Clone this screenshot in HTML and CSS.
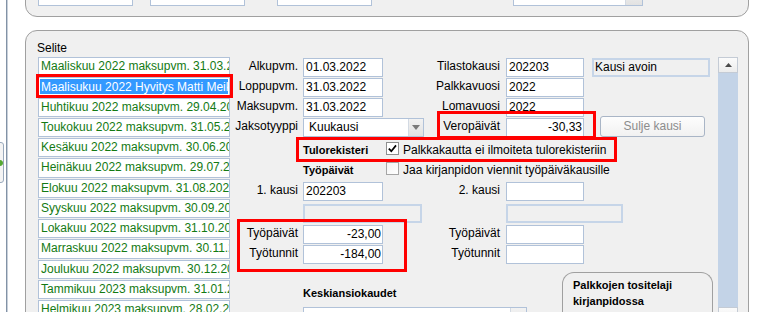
FILE: index.html
```html
<!DOCTYPE html>
<html lang="fi">
<head>
<meta charset="utf-8">
<title>Palkkakausi</title>
<link rel="stylesheet" href="styles.css">
</head>
<body>
<div class="page">
  <div class="side">
    <div class="side-btn"><span class="side-ico"></span></div>
    <div class="side-line"></div>
  </div>
  <div class="main">
    <div class="group top-group">
      <div class="tb w95"></div>
      <div class="tb w95 gap17"></div>
      <div class="tb w95 gap32"></div>
      <div class="tb combo top-combo">
        <span class="combo-text">«Kaikki»</span>
        <span class="combo-btn"><svg width="7" height="4" viewBox="0 0 7 4"><path d="M0 0H7L3.5 4Z" fill="#333"/></svg></span>
      </div>
    </div>

    <div class="group main-group">
      <div class="col-list">
        <div class="caption">Selite</div>
        <div class="list">
          <div class="item">Maaliskuu 2022 maksupvm. 31.03.2022</div>
          <div class="item selected"><span>Maalisukuu 2022 Hyvitys Matti Meikäläinen</span></div>
          <div class="item">Huhtikuu 2022 maksupvm. 29.04.2022</div>
          <div class="item">Toukokuu 2022 maksupvm. 31.05.2022</div>
          <div class="item">Kesäkuu 2022 maksupvm. 30.06.2022</div>
          <div class="item">Heinäkuu 2022 maksupvm. 29.07.2022</div>
          <div class="item">Elokuu 2022 maksupvm. 31.08.2022</div>
          <div class="item">Syyskuu 2022 maksupvm. 30.09.2022</div>
          <div class="item">Lokakuu 2022 maksupvm. 31.10.2022</div>
          <div class="item">Marraskuu 2022 maksupvm. 30.11.2022</div>
          <div class="item">Joulukuu 2022 maksupvm. 30.12.2022</div>
          <div class="item">Tammikuu 2023 maksupvm. 31.01.2023</div>
          <div class="item">Helmikuu 2023 maksupvm. 28.02.2023</div>
        </div>
        <div class="mark mark-item"></div>
      </div>

      <div class="form">
        <div class="lbl c-l1 r1">Alkupvm.</div>
        <div class="tb c-i1 r1">01.03.2022</div>
        <div class="lbl lbl2 c-l2 r1">Tilastokausi</div>
        <div class="tb c-i2 r1">202203</div>
        <div class="status c-r r1">Kausi avoin</div>

        <div class="lbl c-l1 r2">Loppupvm.</div>
        <div class="tb c-i1 r2">31.03.2022</div>
        <div class="lbl lbl2 c-l2 r2">Palkkavuosi</div>
        <div class="tb c-i2 r2">2022</div>

        <div class="lbl c-l1 r3">Maksupvm.</div>
        <div class="tb c-i1 r3">31.03.2022</div>
        <div class="lbl lbl2 c-l2 r3">Lomavuosi</div>
        <div class="tb c-i2 r3">2022</div>

        <div class="lbl c-l1 r4">Jaksotyyppi</div>
        <div class="tb combo kausi-combo c-i1x r4">
          <span class="combo-text">Kuukausi</span>
          <span class="combo-btn"><svg width="8" height="5" viewBox="0 0 8 5"><path d="M0 0H8L4 5Z" fill="#7a7a7a"/></svg></span>
        </div>
        <div class="lbl lbl2 c-l2 r4">Veropäivät</div>
        <div class="tb num c-i2 r4">-30,33</div>
        <div class="btn c-r r4">Sulje kausi</div>

        <div class="head c-i1x r5">Tulorekisteri</div>
        <div class="check-row c-x1e r5">
          <span class="cb checked"><svg width="11" height="11" viewBox="0 0 11 11"><path d="M1.8 5.6L4.3 8.2L9 2.4" fill="none" stroke="#000" stroke-width="1.7"/></svg></span>
          <span class="cb-text">Palkkakautta ei ilmoiteta tulorekisteriin</span>
        </div>

        <div class="head c-i1x r6">Työpäivät</div>
        <div class="check-row c-x1e r6">
          <span class="cb"></span>
          <span class="cb-text">Jaa kirjanpidon viennit työpäiväkausille</span>
        </div>

        <div class="lbl c-l1 r7">1. kausi</div>
        <div class="tb c-i1 r7">202203</div>
        <div class="lbl lbl2 c-l2 r7">2. kausi</div>
        <div class="tb c-i2 r7"></div>

        <div class="ro ro1 c-i1x r8"></div>
        <div class="ro ro2 c-i2e r8"></div>

        <div class="lbl c-l1 r9">Työpäivät</div>
        <div class="tb num c-i1 r9">-23,00</div>
        <div class="lbl lbl2 c-l2 r9">Työpäivät</div>
        <div class="tb c-i2 r9"></div>

        <div class="lbl c-l1 r10">Työtunnit</div>
        <div class="tb num c-i1 r10">-184,00</div>
        <div class="lbl lbl2 c-l2 r10">Työtunnit</div>
        <div class="tb c-i2 r10"></div>

        <div class="bottom c-i1e r11">
          <div class="kesk">
            <div class="head">Keskiansiokaudet</div>
            <div class="tb combo kesk-box"><span class="combo-text"></span><span class="combo-btn"></span></div>
          </div>
          <div class="subgroup">
            <div class="head">Palkkojen tositelaji</div>
            <div class="head">kirjanpidossa</div>
          </div>
        </div>

        <div class="mark mark-vero"></div>
        <div class="mark mark-tulo"></div>
        <div class="mark mark-tyo"></div>
      </div>

      <div class="vscroll">
        <div class="sb-btn"><svg width="7" height="4" viewBox="0 0 7 4"><path d="M3.5 0L7 4H0Z" fill="#4a4a4a"/></svg></div>
        <div class="sb-track"></div>
        <div class="sb-btn"></div>
      </div>
    </div>
  </div>
</div>
</body>
</html>
```

FILE: styles.css
```css
html, body {
  margin: 0;
  padding: 0;
}
body {
  background: #ffffff;
  font-family: "Liberation Sans", Arial, sans-serif;
  font-size: 12px;
  color: #000;
  width: 761px;
  height: 312px;
  overflow: hidden;
}
.page {
  display: flex;
  align-items: flex-start;
  height: 312px;
  overflow: hidden;
}

/* left strip */
.side {
  width: 25px;
  flex: none;
  display: flex;
  align-items: flex-start;
}
.side-btn {
  width: 30px;
  height: 41px;
  margin-left: -26px;
  margin-top: 142px;
  box-sizing: border-box;
  border: 1px solid #9aaabd;
  border-radius: 3px;
  background: #f4f4f4;
  display: flex;
  align-items: center;
  justify-content: flex-end;
  flex: none;
}
.side-ico {
  width: 8px;
  height: 6px;
  border-radius: 50%;
  background: #55a832;
  margin-right: 0;
}
.side-line {
  width: 2px;
  height: 312px;
  margin-left: 2px;
  flex: none;
  background: linear-gradient(90deg, #8292a6 50%, #c8d0da 50%);
}

.main {
  width: 724px;
  flex: none;
}

/* group boxes */
.group {
  box-sizing: border-box;
  border: 1px solid #a0a0a0;
  border-radius: 12px;
  background: #f0f0f0;
}
.top-group {
  height: 47px;
  margin-top: -30px;
  padding: 16px 0 0 12px;
  display: flex;
  align-items: flex-start;
}
.w95 { width: 95px; }
.gap17 { margin-left: 17px; }
.gap32 { margin-left: 32px; }
.top-combo {
  margin-left: 141px;
  width: 130px;
}

/* text boxes */
.tb {
  box-sizing: border-box;
  height: 19px;
  border: 1px solid #b1c2d9;
  background: #fff;
  line-height: 17px;
  padding: 0 1px 0 2px;
  white-space: nowrap;
  overflow: hidden;
  align-self: start;
}
.tb.num {
  text-align: right;
}
.combo {
  display: flex;
  padding: 0;
}
.combo-text {
  flex: 1;
  padding-left: 5px;
  overflow: hidden;
}
.combo-btn {
  flex: none;
  width: 15px;
  background: linear-gradient(#f2f2f2, #e2e2e2);
  border-left: 1px solid #d3dae3;
  display: flex;
  align-items: center;
  justify-content: center;
}
.top-combo .combo-text { padding-left: 8px; }
.top-combo .combo-btn { width: 16px; }

.main-group {
  margin-top: 13px;
  height: 330px;
  display: flex;
  align-items: flex-start;
  padding: 9px 10px 0 11px;
}

/* list */
.col-list {
  width: 196px;
  flex: none;
  position: relative;
}
.caption {
  line-height: 16px;
  height: 16px;
}
.list {
  margin-top: 1px;
  margin-left: 1px;
  width: 192px;
}
.item {
  box-sizing: border-box;
  height: 19.25px;
  margin-bottom: 1px;
  border: 1px solid #b1c2d9;
  background: #fff;
  color: #137a13;
  padding-left: 2px;
  line-height: 17px;
  white-space: nowrap;
  overflow: hidden;
}
.item.selected {
  padding: 1px;
}
.item.selected span {
  display: block;
  height: 15px;
  line-height: 17px;
  background: #3399ff;
  color: #fff;
  padding-left: 1px;
  overflow: hidden;
}

/* form grid */
.form {
  width: 480px;
  flex: none;
  margin-top: 18px;
  position: relative;
  display: grid;
  grid-template-columns: 70px 80px 40px 83px 78px 8px 121px;
  grid-template-rows: 20px 20px 20px 24px 20px 20px 22px 21px 20px 20px auto;
}
.c-l1 { grid-column: 1; }
.c-i1 { grid-column: 2; }
.c-i1x { grid-column: 2 / span 2; }
.c-x1e { grid-column: 3 / -1; }
.c-l2 { grid-column: 4; }
.c-i2 { grid-column: 5; }
.c-i2e { grid-column: 5 / -1; }
.c-r { grid-column: 7; }
.c-i1e { grid-column: 2 / -1; }
.r1 { grid-row: 1; }
.r2 { grid-row: 2; }
.r3 { grid-row: 3; }
.r4 { grid-row: 4; }
.r5 { grid-row: 5; }
.r6 { grid-row: 6; }
.r7 { grid-row: 7; }
.r8 { grid-row: 8; }
.r9 { grid-row: 9; }
.r10 { grid-row: 10; }
.r11 { grid-row: 11; }

.lbl {
  line-height: 16px;
  text-align: right;
  padding-right: 5px;
  white-space: nowrap;
  align-self: start;
}
.lbl2 { padding-right: 6px; }

.head {
  font-weight: bold;
  font-size: 11px;
  line-height: 16px;
  white-space: nowrap;
  align-self: start;
}

.status {
  box-sizing: border-box;
  width: 118px;
  height: 19px;
  border: 2px solid #c6d5e8;
  background: #f0f0f0;
  line-height: 15px;
  padding-left: 1px;
  align-self: start;
  white-space: nowrap;
}

.kausi-combo {
  width: 121px;
}
.kausi-combo .combo-text { padding-left: 5px; }
.kausi-combo .combo-btn { width: 14px; }

.btn {
  box-sizing: border-box;
  width: 105px;
  height: 21px;
  margin-left: 8px;
  margin-top: -2px;
  align-self: start;
  border: 1px solid #a9b5c6;
  border-radius: 3px;
  background: linear-gradient(#fdfdfd, #f1f1f1);
  color: #8c8c8c;
  text-align: center;
  line-height: 19px;
}

.check-row {
  display: flex;
  align-items: flex-start;
  padding-left: 3px;
  white-space: nowrap;
}
.cb {
  box-sizing: border-box;
  width: 13px;
  height: 13px;
  border: 1px solid #a6a6a6;
  background: linear-gradient(135deg, #f4f4f4, #ffffff);
  display: flex;
  align-items: center;
  justify-content: center;
  flex: none;
}
.cb.checked {
  border-color: #8e8f8f;
  background: #fff;
}
.cb-text {
  margin-left: 4px;
  line-height: 16px;
}

.ro {
  box-sizing: border-box;
  height: 19px;
  border: 2px solid #c6d5e8;
  background: #f0f0f0;
  align-self: start;
}
.ro1 { width: 119px; }
.ro2 { width: 117px; }

/* bottom area */
.bottom {
  display: flex;
  align-items: flex-start;
}
.kesk {
  width: 224px;
  margin-top: 20px;
  flex: none;
}
.kesk-box {
  width: 224px;
  height: 20px;
  margin-top: 6px;
}
.kesk-box .combo-btn { width: 15px; }
.subgroup {
  box-sizing: border-box;
  width: 151px;
  height: 60px;
  margin-left: 35px;
  margin-top: 7px;
  border: 1px solid #a0a0a0;
  border-bottom: none;
  border-radius: 12px 12px 0 0;
  padding: 4px 0 0 10px;
  flex: none;
}

/* scrollbar */
.vscroll {
  width: 20px;
  margin-left: 5px;
  margin-top: 17px;
  flex: none;
}
.sb-btn {
  box-sizing: border-box;
  height: 16px;
  border: 1px solid #c4cbd5;
  background: linear-gradient(#fbfbfb, #ececec);
  display: flex;
  align-items: center;
  justify-content: center;
}
.sb-track {
  height: 234px;
  background: #c3d3e7;
}

/* red annotation boxes */
.mark {
  position: absolute;
  box-sizing: border-box;
  border: 3px solid #ff0000;
  pointer-events: none;
}
.mark-item { left: -1px; top: 34px; width: 197px; height: 24px; }
.mark-vero { left: 204px; top: 53px; width: 159px; height: 28px; }
.mark-tulo { left: 63px; top: 79px; width: 321px; height: 25px; }
.mark-tyo { left: 4px; top: 161px; width: 170px; height: 53px; }
```
